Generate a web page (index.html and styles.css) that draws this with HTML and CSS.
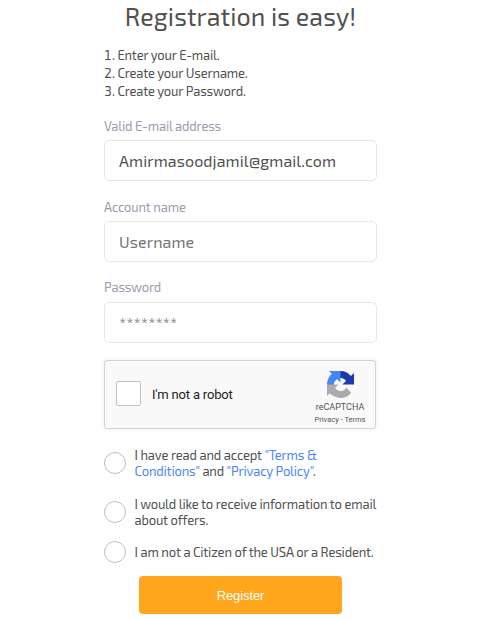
FILE: index.html
```
<!DOCTYPE html>
<html lang="en">
<head>
    <meta charset="UTF-8">
    <meta name="viewport" content="width=device-width, initial-scale=1.0">
    <title>Registration</title>
    <link rel="stylesheet" href="styles.css">
</head>
<body>
    <form class="register-form">
        <h1>Registration is easy!</h1>

        <div class="steps">
            <p>1. Enter your E-mail.</p>
            <p>2. Create your Username.</p>
            <p>3. Create your Password.</p>
        </div>

        <div class="form-group">
            <label for="email">Valid E-mail address</label>
            <input type="text" id="email" value="Amirmasoodjamil@gmail.com">
        </div>

        <div class="form-group">
            <label for="username">Account name</label>
            <input type="text" id="username" placeholder="Username">
        </div>

        <div class="form-group form-group-password">
            <label for="password">Password</label>
            <input type="password" id="password" placeholder="********">
        </div>

        <div class="captcha">
            <span class="captcha-box"></span>
            <span class="captcha-label">I'm not a robot</span>
            <div class="captcha-brand">
                <svg width="27" height="27" viewBox="0 0 64 64">
                    <path fill="#1c3aa9" d="M64 31.955l-.033-1.37V4.687l-7.16 7.16C50.948 4.674 42.033.093 32.05.093c-10.4 0-19.622 4.96-25.458 12.64l11.736 11.86a15.55 15.55 0 0 1 4.754-5.334c2.05-1.6 4.952-2.906 8.968-2.906.485 0 .86.057 1.135.163 4.976.393 9.288 3.14 11.828 7.124l-8.307 8.307L64 31.953"/>
                    <path fill="#4285f4" d="M31.862.094l-1.37.033H4.594l7.16 7.16C4.58 13.147 0 22.06 0 32.046c0 10.4 4.96 19.622 12.64 25.458L24.5 45.768a15.55 15.55 0 0 1-5.334-4.754c-1.6-2.05-2.906-4.952-2.906-8.968 0-.485.057-.86.163-1.135.393-4.976 3.14-9.288 7.124-11.828l8.307 8.307L31.86.095"/>
                    <path fill="#ababab" d="M.001 32.045l.033 1.37v25.898l7.16-7.16c5.86 7.173 14.774 11.754 24.76 11.754 10.4 0 19.622-4.96 25.458-12.64l-11.736-11.86a15.55 15.55 0 0 1-4.754 5.334c-2.05 1.6-4.952 2.906-8.968 2.906-.485 0-.86-.057-1.135-.163-4.976-.393-9.288-3.14-11.828-7.124l8.307-8.307c-10.522.04-22.4.066-27.295-.005"/>
                </svg>
                <span class="brand-name">reCAPTCHA</span>
                <span class="brand-links">Privacy - Terms</span>
            </div>
        </div>

        <div class="agreements">
            <div class="check">
                <span class="circle"></span>
                <p>I have read and accept <a href="#">"Terms &amp;<br>Conditions"</a> and <a href="#">"Privacy Policy"</a>.</p>
            </div>
            <div class="check">
                <span class="circle"></span>
                <p>I would like to receive information to email<br>about offers.</p>
            </div>
            <div class="check check-single">
                <span class="circle"></span>
                <p>I am not a Citizen of the USA or a Resident.</p>
            </div>
        </div>

        <button type="submit">Register</button>
    </form>
</body>
</html>
```
FILE: styles.css
```
:root {
    --text-color: #505050;
    --label-color: #9b9bad;
    --border-color: #e7e7e7;
    --link-color: #4f86f7;
    --accent-color: #ffa61c;
}

* {
    box-sizing: border-box;
    margin: 0;
    padding: 0;
}

body {
    background: #fff;
    color: var(--text-color);
    font-family: "Exo 2", Roboto, sans-serif;
    font-size: 13px;
    letter-spacing: -0.18px;
    overflow: hidden;
}

.register-form {
    width: 273px;
    margin-left: 104px;
}

h1 {
    height: 34px;
    font-size: 25px;
    font-weight: 400;
    letter-spacing: 0.1px;
    line-height: 33px;
    text-align: center;
    white-space: nowrap;
}

.steps {
    margin-top: 12px;
    font-variant-numeric: tabular-nums;
    line-height: 18px;
    white-space: nowrap;
}

.form-group {
    height: 81px;
    padding-top: 18px;
}

label {
    display: block;
    height: 22px;
    color: var(--label-color);
    line-height: 16px;
}

.form-group-password label {
    line-height: 15px;
}

input {
    display: block;
    width: 100%;
    height: 41px;
    padding: 0 14px;
    border: 1px solid var(--border-color);
    border-radius: 5px;
    background: #fff;
    color: var(--text-color);
    font-family: inherit;
    font-size: 16px;
    letter-spacing: 0.1px;
}

input::placeholder {
    color: #757575;
}

.captcha {
    display: flex;
    align-items: center;
    width: 272px;
    height: 69px;
    margin-top: 17px;
    padding: 0 8px 0 11px;
    border: 1px solid #d3d3d3;
    border-radius: 3px;
    background: #f9f9f9;
    box-shadow: 0 0 4px 1px rgba(0, 0, 0, 0.05);
    font-family: Roboto, sans-serif;
}

.captcha-box {
    width: 25px;
    height: 25px;
    margin-bottom: 3px;
    border: 1px solid #c1c1c1;
    border-radius: 2px;
    background: #fff;
}

.captcha-label {
    margin-left: 11px;
    color: #222;
    font-size: 13px;
}

.captcha-brand {
    display: flex;
    flex-direction: column;
    align-items: center;
    width: 54px;
    margin-left: auto;
    padding-top: 6px;
    color: #555;
    letter-spacing: 0;
    white-space: nowrap;
}

.brand-name {
    margin-top: 3px;
    font-size: 9px;
    line-height: 13px;
}

.brand-links {
    font-size: 7.5px;
    line-height: 11px;
}

.agreements {
    display: flex;
    flex-direction: column;
    gap: 17px;
    margin-top: 18px;
}

.check {
    display: flex;
    align-items: center;
    gap: 8.5px;
    height: 32px;
    line-height: 16px;
    white-space: nowrap;
}

.check-single {
    height: 22px;
    margin-top: -4px;
}

.circle {
    flex: none;
    width: 22px;
    height: 22px;
    border: 1px solid #bdbdbd;
    border-radius: 50%;
}

a {
    color: var(--link-color);
    text-decoration: none;
}

button {
    display: block;
    width: 203px;
    height: 38px;
    margin: 13px 0 0 35px;
    border: none;
    border-radius: 4px;
    background: var(--accent-color);
    color: #fff;
    font-family: "Liberation Sans", Arial, sans-serif;
    font-size: 13px;
    letter-spacing: -0.1px;
    cursor: pointer;
}
```
